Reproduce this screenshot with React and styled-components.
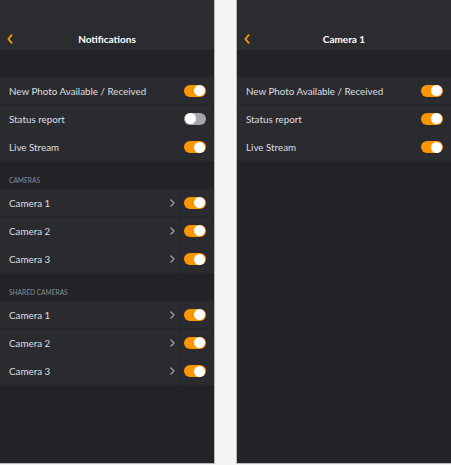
import React from "react";
import styled, { createGlobalStyle } from "styled-components";

const Global = createGlobalStyle`
  html, body { margin: 0; padding: 0; background: #f4f4f5; }
  body { font-family: Lato, "Open Sans", sans-serif; -webkit-font-smoothing: antialiased; }
`;

const Page = styled.div`
  display: grid;
  grid-template-columns: 215px 215px;
  column-gap: 21px;
  width: 451px;
  height: 465px;
  background: #f4f4f5;
`;

const Panel = styled.div`
  display: flex;
  flex-direction: column;
  height: 463px;
  background: #222327;
  border-right: ${(p) => (p.$edge ? "1px solid #b9b9bc" : "none")};
  border-left: ${(p) => (p.$leftEdge ? "1px solid #b9b9bc" : "none")};
  border-bottom: 1px solid #b9b9bc;
  overflow: hidden;
`;

const Header = styled.div`
  height: 50px;
  flex: none;
  background: #2b2c30;
  display: grid;
  grid-template-columns: 30px 1fr 30px;
  align-items: end;
  padding-bottom: 4px;
  box-sizing: border-box;
`;

const Back = styled.div`
  display: flex;
  align-items: center;
  padding-left: 7px;
  height: 14px;
`;

const Title = styled.div`
  text-align: center;
  color: #ffffff;
  font-weight: 700;
  font-size: 10px;
  line-height: 14px;
`;

const Spacer = styled.div`
  height: 27px;
  flex: none;
`;

const Group = styled.div`
  display: flex;
  flex-direction: column;
  flex: none;
`;

const Row = styled.div`
  height: 28px;
  display: flex;
  align-items: center;
  padding: 0 8px 0 9px;
  background: #2a2b2f;
  border-bottom: 1px solid #25262a;
  box-sizing: border-box;
  &:last-child { border-bottom: none; }
`;

const Label = styled.div`
  flex: 1;
  color: #dfdfe2;
  font-size: 9.8px;
  line-height: 14px;
  white-space: nowrap;
`;

const Chevron = styled.div`
  display: flex;
  align-items: center;
  height: 100%;
  padding-right: 5px;
  margin-right: 3px;
  border-right: 1px solid #26272b;
`;

const SectionHead = styled.div`
  height: 28px;
  flex: none;
  display: flex;
  align-items: flex-end;
  padding: 0 9px 5px;
  box-sizing: border-box;
  color: #8a8b90;
  font-size: 6.6px;
  text-transform: uppercase;
`;

const Toggle = styled.div`
  width: 22px;
  height: 12px;
  border-radius: 6px;
  background: ${(p) => (p.$on ? "#ff9500" : "#a5a5aa")};
  position: relative;
  flex: none;
  &::after {
    content: "";
    position: absolute;
    top: 0.5px;
    ${(p) => (p.$on ? "right: 1px;" : "left: 1px;")}
    width: 11px;
    height: 11px;
    border-radius: 50%;
    background: #ffffff;
  }
`;

const BackIcon = () => (
  <svg width="6" height="10" viewBox="0 0 6 10">
    <path d="M4.6 1.2 L1.4 5 L4.6 8.8" fill="none" stroke="#ff9500" strokeWidth="1.8" strokeLinecap="round" strokeLinejoin="round" />
  </svg>
);

const ChevronIcon = () => (
  <svg width="5" height="8" viewBox="0 0 5 8">
    <path d="M1 1 L4 4 L1 7" fill="none" stroke="#a3a4a8" strokeWidth="1.3" strokeLinecap="round" strokeLinejoin="round" />
  </svg>
);

const SettingRow = ({ label, on = true, chevron = false }) => (
  <Row>
    <Label>{label}</Label>
    {chevron && (
      <Chevron>
        <ChevronIcon />
      </Chevron>
    )}
    <Toggle $on={on} />
  </Row>
);

const ScreenHeader = ({ title }) => (
  <Header>
    <Back>
      <BackIcon />
    </Back>
    <Title>{title}</Title>
    <div />
  </Header>
);

export default function App() {
  return (
    <>
      <Global />
      <Page>
        <Panel $edge>
          <ScreenHeader title="Notifications" />
          <Spacer />
          <Group>
            <SettingRow label="New Photo Available / Received" />
            <SettingRow label="Status report" on={false} />
            <SettingRow label="Live Stream" />
          </Group>
          <SectionHead>Cameras</SectionHead>
          <Group>
            <SettingRow label="Camera 1" chevron />
            <SettingRow label="Camera 2" chevron />
            <SettingRow label="Camera 3" chevron />
          </Group>
          <SectionHead>Shared cameras</SectionHead>
          <Group>
            <SettingRow label="Camera 1" chevron />
            <SettingRow label="Camera 2" chevron />
            <SettingRow label="Camera 3" chevron />
          </Group>
        </Panel>
        <Panel $leftEdge>
          <ScreenHeader title="Camera 1" />
          <Spacer />
          <Group>
            <SettingRow label="New Photo Available / Received" />
            <SettingRow label="Status report" />
            <SettingRow label="Live Stream" />
          </Group>
        </Panel>
      </Page>
    </>
  );
}
